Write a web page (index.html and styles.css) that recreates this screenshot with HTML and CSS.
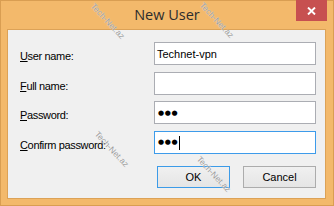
FILE: index.html
```html
<!DOCTYPE html>
<html>
<head>
<meta charset="utf-8">
<title>New User</title>
<link rel="stylesheet" href="styles.css">
</head>
<body>
<div class="window">
  <div class="titlebar">
    <span class="title">New User</span>
    <div class="close">
      <svg width="9" height="8" viewBox="0 0 9 8"><path d="M1 0.5 L8 7.5 M8 0.5 L1 7.5" stroke="#fff" stroke-width="1.9" fill="none"/></svg>
    </div>
  </div>
  <div class="content">
    <div class="form">
      <label class="lbl"><u>U</u>ser name:</label>
      <div class="input">Technet-vpn</div>
      <label class="lbl"><u>F</u>ull name:</label>
      <div class="input"></div>
      <label class="lbl"><u>P</u>assword:</label>
      <div class="input pw">●●●</div>
      <label class="lbl"><u>C</u>onfirm password:</label>
      <div class="input pw focus">●●●<span class="caret"></span></div>
    </div>
    <div class="buttons">
      <button class="btn default">OK</button>
      <button class="btn">Cancel</button>
    </div>
  </div>
  <span class="wm wm1">Tech-Net.az</span>
  <span class="wm wm2">Tech-Net.az</span>
  <span class="wm wm3">Tech-Net.az</span>
  <span class="wm wm4">Tech-Net.az</span>
</div>
</body>
</html>
```
FILE: styles.css
```css
* { box-sizing: border-box; }
html, body { margin: 0; padding: 0; }
body { width: 334px; height: 206px; overflow: hidden; background: #f2b86a; }
.window {
  position: relative;
  width: 334px;
  height: 206px;
  background: #f3b96b;
  border: 1px solid #d99e52;
  display: flex;
  flex-direction: column;
  font-family: "Liberation Sans", Arial, sans-serif;
  font-size: 11px;
  color: #000;
}
.titlebar {
  height: 28px;
  display: flex;
  align-items: flex-start;
  justify-content: center;
  position: relative;
}
.title {
  font-family: "Open Sans", "Noto Sans", sans-serif;
  font-size: 14.5px;
  line-height: 20px;
  margin-top: 4px;
  color: #2d2d2d;
}
.close {
  position: absolute;
  top: -1px;
  right: 6px;
  width: 31px;
  height: 21px;
  background: #c75050;
  display: flex;
  align-items: center;
  justify-content: center;
}
.close svg { display: block; }
.content {
  flex: 1;
  margin: 0 7px 6px 6px;
  border: 1px solid #dca257;
  background: #f0f0f0;
  display: flex;
  flex-direction: column;
}
.form {
  display: grid;
  grid-template-columns: 134px 162px;
  grid-auto-rows: 23px;
  row-gap: 6.5px;
  padding: 12px 0 0 12px;
}
.lbl {
  line-height: 13px;
  padding-top: 8px;
  white-space: nowrap;
  letter-spacing: -0.35px;
}
.lbl u { text-underline-offset: 1px; }
.input {
  background: #fff;
  border: 1px solid #abadb3;
  line-height: 19px;
  padding: 1px 0 0 2px;
  white-space: nowrap;
  display: flex;
  align-items: center;
}
.pw {
  font-family: "DejaVu Sans", sans-serif;
  font-size: 7px;
  letter-spacing: 0.6px;
  padding-left: 3px;
}
.focus { border-color: #3d9bea; }
.caret {
  display: inline-block;
  width: 1px;
  height: 14px;
  background: #000;
  margin-left: 1px;
}
.buttons {
  display: flex;
  justify-content: flex-end;
  gap: 13px;
  padding: 0 9px 0 0;
  margin-top: 12px;
}
.btn {
  width: 73px;
  height: 22px;
  font-family: "Liberation Sans", Arial, sans-serif;
  font-size: 11px;
  color: #000;
  background: linear-gradient(#f0f0f0, #e5e5e5);
  border: 1px solid #acacac;
  padding: 0;
  margin: 0;
}
.btn.default { border-color: #3c9be8; }
.wm {
  position: absolute;
  font-family: "Liberation Sans", Arial, sans-serif;
  font-size: 8.5px;
  color: #9c9c9c;
  text-shadow: 0 0 1px #fff;
  transform-origin: 0 0;
  transform: rotate(47deg);
  white-space: nowrap;
}
.wm1 { left: 95px; top: 0px; }
.wm2 { left: 204px; top: -1px; }
.wm3 { left: 99px; top: 128px; }
.wm4 { left: 201px; top: 153px; }
```
